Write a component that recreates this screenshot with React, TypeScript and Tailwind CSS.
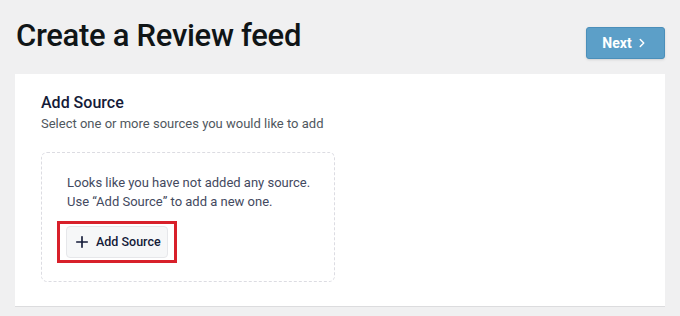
import { ChevronRight, Plus } from 'lucide-react';

export default function App() {
  return (
    <div
      className="w-[680px] h-[316px] overflow-hidden bg-[#f0f0f1] text-[#1d2327]"
      style={{ fontFamily: 'Roboto, "Noto Sans", Arial, sans-serif' }}
    >
      {/* Header */}
      <div className="flex items-start justify-between pl-[16px] pr-[15px] pt-[17px]">
        <h1 className="text-[31px] leading-[38px] font-medium tracking-[-0.3px] text-[#101517]">Create a Review feed</h1>
        <button className="mt-[10px] flex items-center justify-center gap-[3px] w-[79px] h-[32px] rounded-[3px] bg-[#5c9fc8] border border-[#4b8fba] text-white text-[14px] font-bold shadow-sm">
          Next
          <ChevronRight size={14} strokeWidth={2.5} />
        </button>
      </div>

      {/* Card */}
      <div className="mx-[15px] mt-[15px] h-[233px] bg-white border-b border-[#dcdcde] pl-[26px] pt-[18px]">
        <h2 className="text-[16px] leading-[22px] font-medium text-[#141b38]">Add Source</h2>
        <p className="mt-[1px] text-[13px] leading-[18px] text-[#50575e]">Select one or more sources you would like to add</p>

        <div className="mt-[19px] w-[294px] h-[130px] rounded-[6px] border border-dashed border-[#dcdce2] pl-[25px] pt-[20px]">
          <p className="text-[13px] leading-[19px] text-[#434960] whitespace-nowrap">
            Looks like you have not added any source.
            <br />
            Use “Add Source” to add a new one.
          </p>
          <div className="mt-[10px] -ml-[10px] inline-block border-[3px] border-[#d8202a] px-[6px] py-[2px]">
            <button className="flex items-center gap-[5px] h-[32px] w-[102px] pl-[6px] rounded-[4px] bg-[#f6f7f8] border border-[#e6e7ea] text-[12.5px] font-medium text-[#141b38] whitespace-nowrap">
              <Plus size={18} strokeWidth={2.2} />
              Add Source
            </button>
          </div>
        </div>
      </div>
    </div>
  );
}
